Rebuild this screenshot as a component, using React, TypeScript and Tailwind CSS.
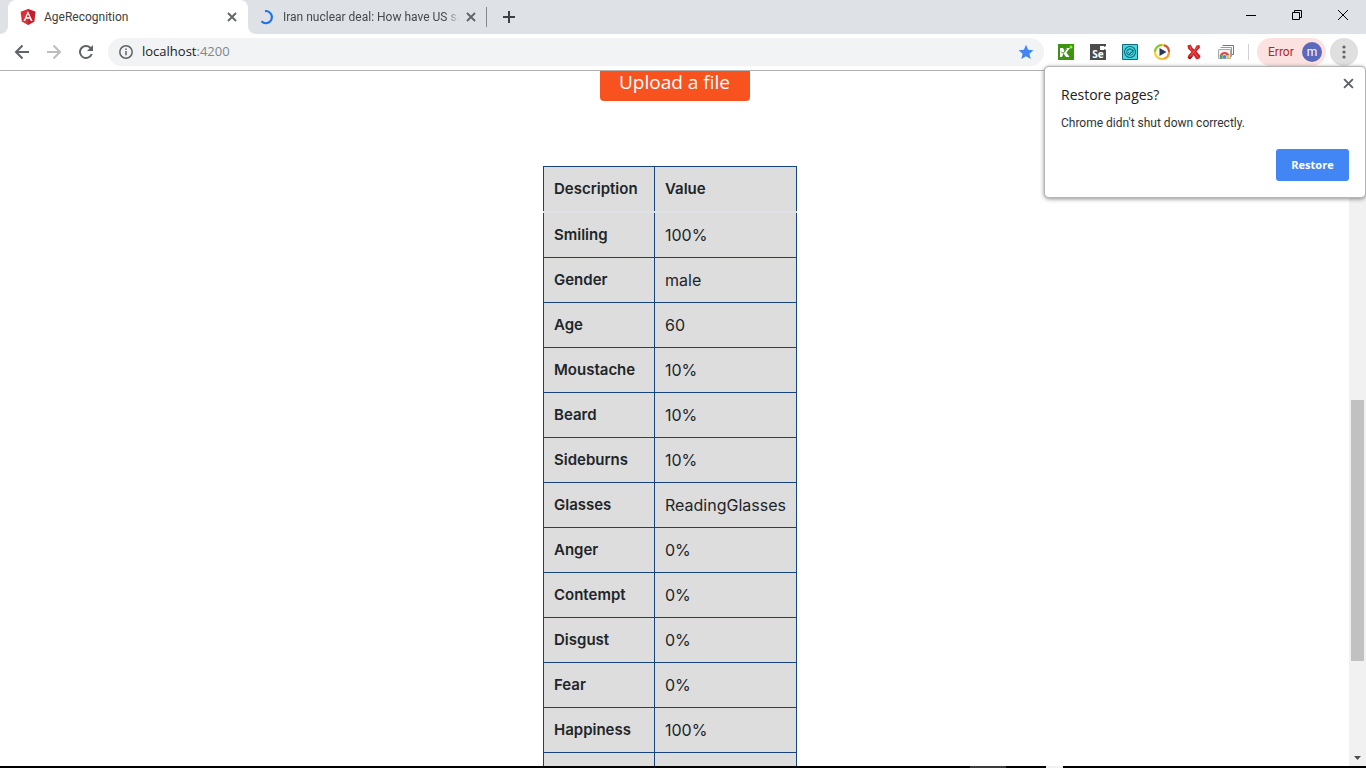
import type { ReactNode } from 'react';

const rows: [string, string][] = [
  ['Smiling', '100%'],
  ['Gender', 'male'],
  ['Age', '60'],
  ['Moustache', '10%'],
  ['Beard', '10%'],
  ['Sideburns', '10%'],
  ['Glasses', 'ReadingGlasses'],
  ['Anger', '0%'],
  ['Contempt', '0%'],
  ['Disgust', '0%'],
  ['Fear', '0%'],
  ['Happiness', '100%'],
  ['', ''],
];

function IconButton({ label, className = '', children }: { label: string; className?: string; children: ReactNode }) {
  return (
    <button type="button" aria-label={label} className={`flex shrink-0 items-center justify-center ${className}`}>
      {children}
    </button>
  );
}

function Cross({ className }: { className: string }) {
  return (
    <svg viewBox="0 0 10 10" className={className} fill="none" stroke="currentColor" strokeWidth="1.8">
      <path d="M1 1l8 8M9 1l-8 8" />
    </svg>
  );
}

function AngularLogo() {
  return (
    <svg viewBox="0 0 16 16" className="size-4 shrink-0">
      <path d="M8 0L15.4 2.7 14.2 12.4 8 16 1.8 12.4.6 2.7z" fill="#dd3036" />
      <path d="M8 0l7.4 2.7-1.2 9.7L8 16z" fill="#c3202f" />
      <path d="M8 2L3.5 12h1.7l.9-2.3h3.8l.9 2.3h1.7zm0 3.1l1.3 3.2H6.7z" fill="#fff" />
    </svg>
  );
}

function TabStrip() {
  return (
    <div className="flex h-[34px] bg-white font-['Roboto','Open_Sans',sans-serif]">
      <div className="w-2 shrink-0 rounded-br-lg bg-[#dee1e6]" />
      <div className="w-60 shrink-0 bg-[#dee1e6]">
        <div className="flex h-full items-center rounded-t-lg bg-white pl-3 pr-[11px]">
          <AngularLogo />
          <span className="ml-2 flex-1 text-[12px] text-[#3c4043]">AgeRecognition</span>
          <IconButton label="Close tab" className="text-[#5f6368]"><Cross className="size-[10px]" /></IconButton>
        </div>
      </div>
      <div className="flex min-w-0 flex-1 items-center rounded-bl-lg bg-[#dee1e6] pl-3">
        <svg viewBox="0 0 16 16" className="size-4 shrink-0" fill="none" stroke="#1a73e8" strokeWidth="2">
          <path d="M5 2.2a6 6 0 1 1-3.5 10" />
        </svg>
        <span className="ml-[7px] w-[176px] shrink-0 overflow-hidden whitespace-nowrap text-[12px] text-[#45494d] [mask-image:linear-gradient(to_right,black_92%,transparent)]">
          Iran nuclear deal: How have US sa
        </span>
        <IconButton label="Close tab" className="ml-[7px] text-[#5f6368]"><Cross className="size-[10px]" /></IconButton>
        <span className="ml-[10px] h-5 w-px shrink-0 bg-[#83868b]" />
        <IconButton label="New tab" className="ml-4 text-[#3c4043]">
          <svg viewBox="0 0 12 12" className="size-3" fill="none" stroke="currentColor" strokeWidth="2"><path d="M6 0v12M0 6h12" /></svg>
        </IconButton>
        <div className="mb-1 ml-auto flex h-7 items-center text-black">
          <IconButton label="Minimize" className="w-[46px]">
            <svg viewBox="0 0 10 10" className="size-[10px]"><path d="M0 5h10v1H0z" fill="currentColor" /></svg>
          </IconButton>
          <IconButton label="Restore window" className="w-[46px]">
            <svg viewBox="0 0 10 10" className="size-[10px]" fill="none" stroke="currentColor"><path d="M.5 2.5h7v7h-7zM2.5 2.5v-2h7v7h-2" /></svg>
          </IconButton>
          <IconButton label="Close window" className="w-[46px]">
            <svg viewBox="0 0 10 10" className="size-[10px]" fill="none" stroke="currentColor"><path d="M0 0l10 10M10 0L0 10" /></svg>
          </IconButton>
        </div>
      </div>
    </div>
  );
}

function Extensions() {
  return (
    <div className="ml-[14px] flex items-center gap-4">
      <IconButton label="Katalon Recorder">
        <svg viewBox="0 0 16 16" className="size-4">
          <path d="M0 0h16v16H0z" fill="#3c940f" />
          <path d="M2 4h3l1.5 3L9 4h3L8.5 8.5 11.5 13H8L5.5 9.5 4 13H2z" fill="#fff" />
          <path d="M3 7.5l2 2L8.5 5" fill="none" stroke="#3c940f" strokeWidth="1" />
          <circle cx="13" cy="3" r="1.5" fill="#7dff1c" />
        </svg>
      </IconButton>
      <IconButton label="Selenium IDE" className="size-4 bg-[#4b4b4d]">
        <span className="relative flex size-4 items-end justify-center text-[10px] font-bold leading-[11px] text-white">
          Se
          <svg viewBox="0 0 6 4" className="absolute right-0 top-0.5 h-1 w-1.5"><path d="M0 0h4v1l2-1v4L4 3v1H0z" fill="#fff" /></svg>
        </span>
      </IconButton>
      <IconButton label="Test recorder">
        <svg viewBox="0 0 16 16" className="size-4" fill="none">
          <path d="M.5.5h15v15H.5z" fill="#43d8e2" stroke="#176b78" />
          <circle cx="8" cy="8" r="5.5" stroke="#146775" strokeWidth="1.1" />
          <circle cx="8" cy="8" r="3.3" stroke="#146775" strokeWidth=".7" />
          <path d="M4 9l3 2 5-5M5 7l3-2 3 2M6 8l1.5 1.5L11 7" stroke="#146775" strokeWidth=".8" />
        </svg>
      </IconButton>
      <IconButton label="Playback">
        <svg viewBox="0 0 16 16" className="size-4" fill="none" strokeWidth="2">
          <circle cx="8" cy="8" r="7" fill="#fff" stroke="#f2c230" />
          <path d="M8 1a7 7 0 0 0-7 7" stroke="#7fca45" />
          <path d="M1 8a7 7 0 0 0 4 6.3" stroke="#f3d934" />
          <path d="M10 1.3A7 7 0 0 1 15 8" stroke="#db4d3c" />
          <path d="M15 8a7 7 0 0 1-5 6.7" stroke="#efa03a" />
          <path d="M5.5 4l7 4-7 4z" fill="#253a55" />
        </svg>
      </IconButton>
      <IconButton label="XPath helper">
        <svg viewBox="0 0 16 16" className="size-4">
          <path d="M1.5 1.5l3-1 2.5 4 1.5 1L10.5 1.5l3-.5.5 2.5-3.5 4 4 4.5-1 2.5-3 1L7.5 11 4 15.5 1.5 14l1-3 3-3L2 4.5z" fill="#cf2427" />
          <path d="M4 2.5l1 3 4 4 3 4M12 2.5l-3 4-5 6" fill="none" stroke="#f06564" strokeWidth=".8" />
          <path d="M2.5 12.5L4 15l2.5-3" fill="none" stroke="#8d1115" />
        </svg>
      </IconButton>
      <IconButton label="Web store launcher">
        <svg viewBox="0 0 16 16" className="size-4" fill="none">
          <path d="M4.5 1.5h11v9h-2" stroke="#777" />
          <path d="M2.5 3.5h11v9h-1" stroke="#999" />
          <path d="M.5 5.5h12v9H.5z" fill="#f2f2f2" stroke="#aaa" />
          <path d="M2 11a5 5 0 0 1 9.2 0L8.5 12a2 2 0 0 0-4 0z" fill="#dd4a3b" />
          <path d="M1.8 10.5L4.5 12v2.5H2z" fill="#3e9f58" />
          <path d="M8.5 11.5l2.7-.5v3.5H8.5z" fill="#f3c441" />
          <circle cx="6.5" cy="12.7" r="1.8" fill="#4285f4" />
        </svg>
      </IconButton>
    </div>
  );
}

function Toolbar() {
  return (
    <div className="flex h-[37px] items-center border-b border-[#b0b0b0] bg-white pl-[14px] pr-2 text-[#5f6368]">
      <IconButton label="Back">
        <svg viewBox="0 0 16 16" className="size-4" fill="none" stroke="currentColor" strokeWidth="2"><path d="M15 8H2M8.5 1.5L2 8l6.5 6.5" /></svg>
      </IconButton>
      <IconButton label="Forward" className="ml-4 text-[#bbbdbf]">
        <svg viewBox="0 0 16 16" className="size-4" fill="none" stroke="currentColor" strokeWidth="2"><path d="M1 8h13M7.5 1.5L14 8l-6.5 6.5" /></svg>
      </IconButton>
      <IconButton label="Reload" className="ml-4">
        <svg viewBox="0 0 16 16" className="size-4"><path d="M13 3A7 7 0 1 0 14.7 10h-2.1A5 5 0 1 1 11.5 4.5L9 7h6V1z" fill="currentColor" /></svg>
      </IconButton>
      <div className="ml-[14px] flex h-7 min-w-0 flex-1 items-center rounded-full bg-[#f1f3f4] pl-[11px] pr-[10px]">
        <IconButton label="Site information">
          <svg viewBox="0 0 14 14" className="size-[14px]" fill="none" stroke="currentColor" strokeWidth="1.5">
            <circle cx="7" cy="7" r="6.2" /><path d="M7 6v4.3M7 3.4v1.5" />
          </svg>
        </IconButton>
        <div role="textbox" aria-label="Address" tabIndex={0} contentEditable suppressContentEditableWarning className="ml-[9px] flex-1 text-[13px] text-[#202124]">
          localhost<span className="text-[#80868b]">:4200</span>
        </div>
        <IconButton label="Bookmark" className="text-[#4285f4]">
          <svg viewBox="0 0 16 16" className="size-4"><path d="M8 .8l2.1 5 5.4.4-4.1 3.5 1.3 5.3L8 12.2 3.3 15l1.3-5.3L.5 6.2l5.4-.4z" fill="currentColor" /></svg>
        </IconButton>
      </div>
      <Extensions />
      <span className="ml-[14px] h-4 w-px shrink-0 bg-[#cfd1d4]" />
      <button type="button" className="ml-2 flex h-7 w-[69px] shrink-0 items-center justify-between rounded-full bg-[#fbe2e1] pl-[11px] pr-1 font-['Roboto','Open_Sans',sans-serif] text-[12px] text-[#b3261e]">
        Error
        <span className="flex size-5 items-center justify-center rounded-full bg-[#5b69bc] pb-px text-[12px] leading-none text-white">m</span>
      </button>
      <IconButton label="Customize browser" className="ml-1 size-7 rounded-full bg-[#dfdfdf]">
        <svg viewBox="0 0 4 14" className="h-[14px] w-1" fill="currentColor"><circle cx="2" cy="2" r="1.6" /><circle cx="2" cy="7" r="1.6" /><circle cx="2" cy="12" r="1.6" /></svg>
      </IconButton>
    </div>
  );
}

function RestoreDialog() {
  return (
    <section role="dialog" aria-label="Restore pages?" className="absolute right-px top-[67px] w-80 rounded-sm bg-white px-4 pb-4 pt-[18px] shadow-[0_0_0_1px_#b5b5b5,0_1px_4px_1px_rgba(0,0,0,0.45)]">
      <IconButton label="Dismiss" className="absolute right-[11px] top-[11px] text-[#5f6368]"><Cross className="size-[11px]" /></IconButton>
      <h2 className="text-[14px] leading-5 text-[#202124]">Restore pages?</h2>
      <p className="mt-2 font-['Roboto','Open_Sans',sans-serif] text-[12px] leading-5 text-[#303236]">Chrome didn't shut down correctly.</p>
      <div className="mt-4 flex justify-end">
        <button type="button" className="h-8 w-[73px] rounded-[3px] bg-[#4285f4] text-[11px] font-bold text-white">Restore</button>
      </div>
    </section>
  );
}

function ResultsTable() {
  return (
    <table className="border-collapse border border-[#17437c] bg-[#dddddd] text-left font-['Inter','Liberation_Sans',sans-serif] text-[16px] leading-6 text-[#212529]">
      <thead>
        <tr className="h-[45px] border-b-2 border-[#dee2e6] text-[15px]">
          <th className="w-[111px] border-x border-[#17437c] px-[10px] font-semibold">Description</th>
          <th className="w-[142px] border-x border-[#17437c] px-[10px] font-semibold">Value</th>
        </tr>
      </thead>
      <tbody>
        {rows.map(([name, value], i) => (
          <tr key={i} className="h-[45px] first:h-[46px]">
            <th scope="row" className="border border-[#17437c] px-[10px] text-[15px] font-semibold">{name}</th>
            <td className="border border-[#17437c] px-[10px]">{value}</td>
          </tr>
        ))}
      </tbody>
    </table>
  );
}

export default function App() {
  return (
    <div className="relative flex h-screen flex-col overflow-hidden bg-white font-['Open_Sans','Noto_Sans',sans-serif]">
      <header>
        <TabStrip />
        <Toolbar />
      </header>
      <div className="flex min-h-0 flex-1">
        <main className="min-w-0 flex-1 overflow-hidden">
          <div className="-mt-2 flex flex-col items-center">
            <button type="button" className="h-[38px] w-[150px] rounded bg-[#f8521f] text-[19px] leading-6 text-white">Upload a file</button>
            <div className="mt-[65px] pr-[9px]"><ResultsTable /></div>
          </div>
        </main>
        <div aria-hidden="true" className="flex w-[17px] shrink-0 flex-col items-center bg-[#f1f1f1] pb-[6px]">
          <div className="flex-[329]" />
          <div className="w-[13px] flex-[261] bg-[#c1c1c1]" />
          <div className="flex-[95]" />
          <svg viewBox="0 0 7 4" className="h-1 w-[7px]"><path d="M0 0h7L3.5 4z" fill="#505050" /></svg>
        </div>
      </div>
      <footer className="flex h-0.5 shrink-0 bg-black">
        <span className="ml-[71%] w-9 bg-[#3b3b3b]" />
        <span className="ml-10 w-[17px] bg-[#f0f0f0]" />
      </footer>
      <RestoreDialog />
    </div>
  );
}
